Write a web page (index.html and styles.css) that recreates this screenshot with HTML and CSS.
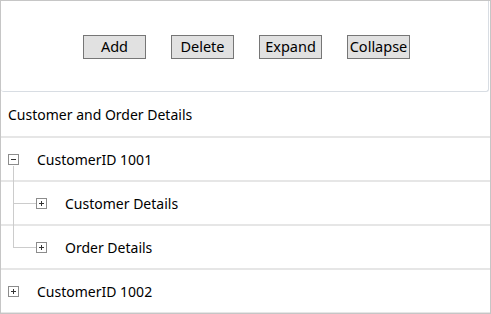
FILE: index.html
```html
<!DOCTYPE html>
<html lang="en-US">
  <head>
    <meta charset="utf-8"/>
    <title>TreeView: Customer and Order Details</title>
    <link rel="stylesheet" href="styles.css">
  </head>

  <body>
    <div class="window">
      <div class="toolbar">
        <button class="btn">Add</button>
        <button class="btn">Delete</button>
        <button class="btn">Expand</button>
        <button class="btn">Collapse</button>
      </div>

      <ul class="tree">
        <li class="node header">
          <span class="label">Customer and Order Details</span>
        </li>
        <li class="node level0 open">
          <svg class="expander" width="11" height="11" viewBox="0 0 11 11">
            <rect x="0.5" y="0.5" width="10" height="10" fill="#fff" stroke="#8c8c8c"/>
            <path d="M3 5.5h5" stroke="#333" stroke-width="1"/>
          </svg>
          <span class="label">CustomerID 1001</span>
        </li>
        <li class="node level1 mid">
          <svg class="expander" width="11" height="11" viewBox="0 0 11 11">
            <rect x="0.5" y="0.5" width="10" height="10" fill="#fff" stroke="#8c8c8c"/>
            <path d="M3 5.5h5M5.5 3v5" stroke="#333" stroke-width="1"/>
          </svg>
          <span class="label">Customer Details</span>
        </li>
        <li class="node level1 last">
          <svg class="expander" width="11" height="11" viewBox="0 0 11 11">
            <rect x="0.5" y="0.5" width="10" height="10" fill="#fff" stroke="#8c8c8c"/>
            <path d="M3 5.5h5M5.5 3v5" stroke="#333" stroke-width="1"/>
          </svg>
          <span class="label">Order Details</span>
        </li>
        <li class="node level0">
          <svg class="expander" width="11" height="11" viewBox="0 0 11 11">
            <rect x="0.5" y="0.5" width="10" height="10" fill="#fff" stroke="#8c8c8c"/>
            <path d="M3 5.5h5M5.5 3v5" stroke="#333" stroke-width="1"/>
          </svg>
          <span class="label">CustomerID 1002</span>
        </li>
      </ul>
    </div>
  </body>

</html>
```

FILE: styles.css
```css
* {
  box-sizing: border-box;
}

body {
  margin: 0;
  background-color: #fff;
  color: #000;
  font: 14px / 1.2 "Segoe UI", "Noto Sans", sans-serif;
}

.window {
  width: 491px;
  height: 314px;
  border: 1px solid #c6c6c6;
  overflow: hidden;
}

.toolbar {
  height: 91px;
  margin-right: 1px;
  border-right: 1px solid #d8dde3;
  border-bottom: 1px solid #d8dde3;
  border-radius: 0 0 3px 3px;
  display: flex;
  justify-content: center;
  align-items: flex-start;
  gap: 25px;
  padding: 34px 0 0 4px;
}

.btn {
  width: 63px;
  height: 24px;
  padding: 0 0 1px;
  background-color: #e1e1e1;
  border: 1px solid #767676;
  border-radius: 0;
  color: #000;
  font: inherit;
  font-size: 14.5px;
}

.tree {
  list-style: none;
  margin: 0;
  padding: 0;
}

.node {
  position: relative;
  height: 44px;
  border-bottom: 2px solid #e6e6e6;
  display: flex;
  align-items: center;
  padding: 2px 0 0 7px;
}

.node.header {
  height: 46px;
  padding-left: 7px;
}

.expander {
  flex: none;
  margin: -1px 18px 0 0;
}

.level1 {
  padding-left: 35px;
}

/* tree connector lines */
.open::after,
.mid::before,
.last::before {
  content: "";
  position: absolute;
  left: 12px;
  width: 1px;
  background-color: #cccccc;
}

.open::after {
  top: 28px;
  bottom: -2px;
}

.mid::before {
  top: 0;
  bottom: -2px;
}

.last::before {
  top: 0;
  height: 22px;
}

.level1::after {
  content: "";
  position: absolute;
  left: 12px;
  top: 21px;
  width: 23px;
  height: 1px;
  background-color: #cccccc;
}
```
